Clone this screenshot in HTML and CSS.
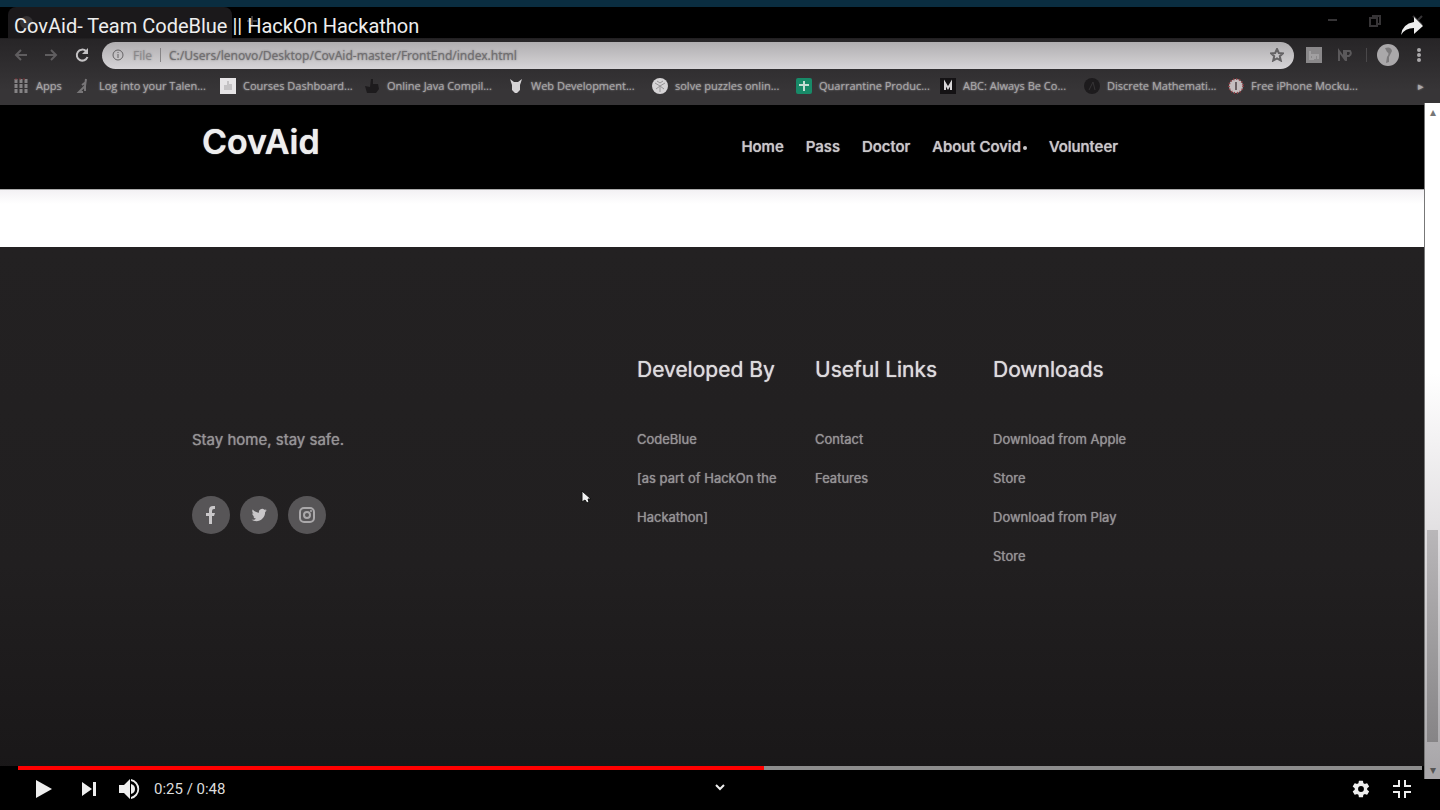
FILE: index.html
```html
<!DOCTYPE html>
<html lang="en">
<head>
<meta charset="utf-8">
<meta name="viewport" content="width=device-width, initial-scale=1">
<title>CovAid- Team CodeBlue || HackOn Hackathon</title>
<link rel="stylesheet" href="styles.css">
</head>
<body>
<main class="player">
  <div class="chrome">
    <div class="strip"></div>
    <div class="tabs">
      <div class="tab"><span class="tab-icon"></span></div>
      <svg class="tab-new" width="10" height="10" viewBox="0 0 10 10"><path fill="none" stroke="#3a383a" stroke-width="2" d="M5 0v10M0 5h10"/></svg>
      <div class="window-buttons">
        <svg width="12" height="12" viewBox="0 0 12 12"><path d="M1 5h9"/></svg>
        <svg width="12" height="12" viewBox="0 0 12 12"><path d="M1 3h7v8H1zM4 3V1h7v8H8"/></svg>
        <svg width="12" height="12" viewBox="0 0 12 12"><path d="M2 1l9 9M11 1l-9 9"/></svg>
      </div>
    </div>
    <div class="toolbar">
      <button class="tool dim" aria-label="Back"><svg width="14" height="14" viewBox="0 0 14 14"><path d="M13 7H2M7 2L2 7l5 5"/></svg></button>
      <button class="tool dim" aria-label="Forward"><svg width="14" height="14" viewBox="0 0 14 14"><path d="M1 7h11M7 2l5 5-5 5"/></svg></button>
      <button class="tool reload" aria-label="Reload"><svg width="16" height="16" viewBox="0 0 16 16"><path d="M12 4a5.500 5.500 0 1 0 1.500 6"/><path class="fill" d="M14 1v6H8z"/></svg></button>
      <div class="address">
        <svg width="12" height="12" viewBox="0 0 12 12"><circle cx="6" cy="6" r="5"/><path d="M6 5v4M6 3v1"/></svg>
        <span class="scheme">File</span><span class="bar"></span>
        <input class="url" aria-label="Address" value="C:/Users/lenovo/Desktop/CovAid-master/FrontEnd/index.html">
        <svg class="star" width="14" height="14" viewBox="0 0 14 14"><path d="M7 1l1.800 4 4.200.4-3.200 2.800 1 4.300L7 10.300l-3.800 2.200 1-4.300L1 5.400 5.200 5z"/></svg>
      </div>
      <div class="extensions">
        <svg width="16" height="16" viewBox="0 0 16 16"><path fill="#8a888a" d="M0 0h16v16H0z"/><path fill="none" stroke="#a19fa1" stroke-width="2" d="M4 4v8h3V8H4M9 12V8h3v4"/></svg>
        <svg class="ext-dim" width="16" height="16" viewBox="0 0 16 16"><path fill="none" stroke="#5b595b" stroke-width="2" d="M2 14V4l5 7V3M9 14V4h4q2 3-1 5H9"/></svg>
        <span class="divider"></span>
        <svg class="avatar" width="22" height="22" viewBox="0 0 22 22"><circle cx="11" cy="11" r="11" fill="#aaa8aa"/><path fill="#7b797b" d="M8 4q6-2 7 3l-3 6v5l-3 1 1-6q3-4 0-5z"/></svg>
        <svg width="4" height="14" viewBox="0 0 4 14" fill="#aaa8aa"><circle cx="2" cy="2" r="2"/><circle cx="2" cy="7" r="2"/><circle cx="2" cy="12" r="2"/></svg>
      </div>
    </div>
    <nav class="bookmarks" aria-label="Bookmarks">
      <a class="apps" href="#"><svg width="16" height="16" viewBox="0 0 16 16"><path stroke="#858385" stroke-width="3" stroke-dasharray="4 1" d="M3 1v14M8 1v14M13 1v14"/><path stroke="#7a3035" stroke-width="1" stroke-dasharray="2 2" d="M2 1h12"/></svg>Apps</a>
      <a href="#"><svg width="16" height="16" viewBox="0 0 16 16"><path fill="none" stroke="#777577" stroke-width="2" d="M10 1l-1 7-6 6h4M9 8v5M6 7l4-3"/></svg>Log into your Talen...</a>
      <a href="#"><svg width="16" height="16" viewBox="0 0 16 16"><path fill="#e6e4e6" d="M0 0h16v16H0z"/><path fill="#c4c2c4" d="M7 3h2v3h3v6H4V7h3z"/></svg>Courses Dashboard...</a>
      <a href="#"><svg width="16" height="16" viewBox="0 0 16 16"><path fill="#1d1b1d" d="M7 1h2v5h5l1 5-3 4H3L1 8l5 1z"/></svg>Online Java Compil...</a>
      <a href="#"><svg width="16" height="16" viewBox="0 0 16 16"><path fill="#d6d4d6" d="M2 1l4 3h4l4-3-2 6v5l-3 3H7l-3-3V7z"/></svg>Web Development...</a>
      <a href="#"><svg width="16" height="16" viewBox="0 0 16 16"><circle cx="8" cy="8" r="8" fill="#d6d4d6"/><path fill="none" stroke="#969496" stroke-width="1" d="M3 5l5 3 5-3M8 8v6M5 3l3 2 3-2M4 11l4-3 4 3"/></svg>solve puzzles onlin...</a>
      <a href="#"><svg width="16" height="16" viewBox="0 0 16 16"><rect width="16" height="16" rx="2" fill="#188a68"/><path fill="none" stroke="#c5ddd4" stroke-width="2" d="M8 3v10M3 7h10"/></svg>Quarrantine Produc...</a>
      <a href="#"><svg width="16" height="16" viewBox="0 0 16 16"><path fill="#141214" d="M0 0h16v16H0z"/><path fill="none" stroke="#d6d4d6" stroke-width="2" d="M5 12V5l3 5 3-5v7"/></svg>ABC: Always Be Co...</a>
      <a href="#"><svg width="16" height="16" viewBox="0 0 16 16"><circle cx="8" cy="8" r="8" fill="#1d1b1d"/><path fill="none" stroke="#353335" stroke-width="1" d="M5 12l4-8 2 8"/></svg>Discrete Mathemati...</a>
      <a href="#"><svg width="16" height="16" viewBox="0 0 16 16"><circle cx="8" cy="8" r="7" fill="#c6bfc0" stroke="#913b40" stroke-width="2" stroke-dasharray="1 2"/><path stroke="#6c6264" stroke-width="2" d="M8 4v8"/></svg>Free iPhone Mocku...</a>
      <span class="more">▸</span>
    </nav>
  </div>

  <div class="viewport">
    <div class="page">
      <header class="header">
        <div class="container header-row">
          <a class="brand" href="#">CovAid</a>
          <nav class="menu" aria-label="Main">
            <a href="#">Home</a><a href="#">Pass</a><a href="#">Doctor</a><a href="#">About Covid<i class="caret"></i></a><a href="#">Volunteer</a>
          </nav>
        </div>
      </header>
      <div class="blank"></div>
      <footer class="footer">
        <div class="container columns">
          <section class="intro">
            <p>Stay home, stay safe.</p>
            <div class="social">
              <a href="#" aria-label="Facebook"><svg width="18" height="18" viewBox="0 0 18 18"><path fill="#c9c7c9" d="M7 18v-8H4V7h3V4q0-4 4-4h2v3h-1q-2 0-2 2v2h3l-1 3h-2v8z"/></svg></a>
              <a href="#" aria-label="Twitter"><svg width="16" height="16" viewBox="0 0 24 24"><path fill="#c9c7c9" d="M23.600 5c-.8.400-1.700.6-2.600.8 1-.6 1.600-1.500 2-2.600-.9.500-1.900.9-2.900 1.100A4.700 4.700 0 0 0 12 8.500C8.200 8.300 4.800 6.500 2.500 3.700c-1.200 2-.6 4.800 1.400 6.200-.7 0-1.500-.2-2.100-.6 0 2.200 1.500 4.200 3.700 4.700-.7.200-1.400.2-2.100.1.600 1.900 2.300 3.200 4.300 3.200A9.400 9.400 0 0 1 .8 19.200c10 5.700 20.600-1.600 20.400-11.700 1-.7 1.800-1.500 2.400-2.500z"/></svg></a>
              <a href="#" aria-label="Instagram"><svg width="18" height="18" viewBox="0 0 18 18"><g fill="none" stroke="#aaa8aa" stroke-width="2"><rect x="2" y="2" width="14" height="14" rx="4"/><circle cx="9" cy="9" r="3"/></g><circle cx="13" cy="5" r="1" fill="#aaa8aa"/></svg></a>
            </div>
          </section>
          <section>
            <h2>Developed By</h2>
            <ul><li>CodeBlue</li><li>[as part of HackOn the Hackathon]</li></ul>
          </section>
          <section>
            <h2>Useful Links</h2>
            <ul><li><a href="#">Contact</a></li><li><a href="#">Features</a></li></ul>
          </section>
          <section>
            <h2>Downloads</h2>
            <ul><li><a href="#">Download from Apple Store</a></li><li><a href="#">Download from Play Store</a></li></ul>
          </section>
        </div>
      </footer>
    </div>
    <div class="scrollbar"><span class="arrow">▴</span><span class="space"></span><span class="thumb"></span><span class="arrow end">▾</span></div>
  </div>

  <div class="titlebar">
    <h1>CovAid- Team CodeBlue || HackOn Hackathon</h1>
    <button aria-label="Share"><svg width="24" height="20" viewBox="0 0 24 20"><path fill="#eee" d="M14 1l9 9-9 8v-6Q5 12 1 19 2 8 14 6z"/></svg></button>
  </div>

  <svg class="cursor" width="10" height="14" viewBox="0 0 10 14"><path fill="#f2f2f2" stroke="#111" d="M1 1v11l3-2 2 3 2-1-1-3h3z"/></svg>

  <div class="controls">
    <div class="progress"><div class="played" style="width:53.1%"></div></div>
    <div class="control-row">
      <div class="group">
        <button class="play" aria-label="Play"><svg width="16" height="18" viewBox="0 0 16 18"><path d="M0 0l16 9-16 9z"/></svg></button>
        <button class="next" aria-label="Next"><svg width="14" height="14" viewBox="0 0 14 14"><path d="M0 0l10 7-10 7zM11 0h3v14h-3z"/></svg></button>
        <button class="volume" aria-label="Mute"><svg width="21" height="20" viewBox="0 0 21 20"><path d="M0 6h5l6-6v20l-6-6H0zM12 5q4 1 4 5t-4 5z"/><path d="M12 0a10.200 10.200 0 0 1 0 20v-2a8.200 8.200 0 0 0 0-16z"/></svg></button>
        <span class="time">0:25 / 0:48</span>
      </div>
      <button class="expand" aria-label="More videos"><svg width="10" height="10" viewBox="0 0 10 10"><path fill="none" stroke="#eee" stroke-width="2" d="M1 2l4 4 4-4"/></svg></button>
      <div class="group right">
        <button aria-label="Settings"><svg width="20" height="20" viewBox="0 0 24 24"><path d="M19.400 13a7.500 7.500 0 0 0 0-2l2.100-1.600a.5.500 0 0 0 .1-.7l-2-3.400a.5.500 0 0 0-.6-.2l-2.500 1a7.300 7.300 0 0 0-1.700-1l-.4-2.700a.5.500 0 0 0-.5-.4h-4a.5.500 0 0 0-.5.400L9 5.100a7.700 7.700 0 0 0-1.700 1l-2.500-1a.5.500 0 0 0-.6.200l-2 3.400a.5.500 0 0 0 .1.700L4.500 11a7.900 7.900 0 0 0 0 2l-2.200 1.600a.5.500 0 0 0-.1.700l2 3.400c.1.200.4.300.6.200l2.500-1c.5.400 1.100.8 1.700 1l.4 2.700c0 .2.200.4.500.4h4c.3 0 .5-.2.500-.4l.4-2.700c.6-.2 1.200-.6 1.700-1l2.500 1c.2.100.5 0 .6-.2l2-3.400a.5.500 0 0 0-.1-.7zM12 15.500a3.500 3.500 0 1 1 0-7 3.500 3.500 0 0 1 0 7z"/></svg></button>
        <button aria-label="Exit full screen"><svg width="18" height="18" viewBox="0 0 18 18"><path fill="none" stroke="#eee" stroke-width="2" d="M0 6h6V0M12 0v6h6M0 12h6v6M12 18v-6h6"/></svg></button>
      </div>
    </div>
  </div>
</main>
</body>
</html>
```
FILE: styles.css
```css
* { box-sizing: border-box; }
body { margin: 0; background: #000; font-family: Inter, sans-serif; }
a { color: inherit; text-decoration: none; }
button { display: flex; padding: 0; border: 0; background: none; color: inherit; }
svg { display: block; flex: none; }
h1, h2, p, ul { margin: 0; padding: 0; font-weight: 400; }
ul { list-style: none; }

.player { position: relative; display: flex; flex-direction: column; min-height: 100vh; padding-bottom: 31px; }

/* Browser frame */
.chrome { font-family: "Open Sans", "Noto Sans", sans-serif; text-shadow: 0 0 2px currentColor; background: linear-gradient(#1c1a1c 38px, #272527 39px, #373537 90px); }
.strip { height: 7px; background: #0a2d40; }
.tabs { display: flex; align-items: center; height: 31px; background: #000; }
.tab { width: 224px; height: 31px; margin-left: 8px; padding: 9px 12px; border-radius: 8px 8px 0 0; background: #1b191b; }
.tab-icon { display: block; width: 13px; height: 13px; border-radius: 50%; background: #353335; }
.tab-new { margin: 0 0 4px 15px; }
.window-buttons { display: flex; gap: 30px; margin-left: auto; padding: 0 17px 4px 0; fill: none; stroke: #363436; stroke-width: 2; }

.toolbar { display: flex; align-items: center; height: 34px; padding: 0 19px 0 14px; }
.tool { margin-right: 16px; fill: none; stroke: #c4c2c4; stroke-width: 2; }
.tool.dim { stroke: #5f5d5f; }
.tool.reload { margin-right: 12px; }
.fill { fill: #c4c2c4; stroke: none; }
.address { display: flex; flex: 1; align-items: center; height: 27px; padding: 0 10px; border-radius: 14px; background: linear-gradient(#b0aeb0, #d6d4d7); color: #706e70; font-size: 12px; fill: none; stroke: #646264; stroke-width: 1; }
.scheme { margin-left: 9px; color: #8a888a; }
.star { stroke-width: 2; }
.bar { width: 1px; height: 14px; margin: 0 8px; background: #868486; }
.url { flex: 1; min-width: 0; padding: 0; border: 0; background: none; color: inherit; font: 12px "Noto Sans", sans-serif; text-shadow: inherit; }
.extensions { display: flex; align-items: center; margin-left: 12px; }
.ext-dim { margin-left: 15px; }
.divider { width: 1px; height: 14px; margin: 0 10px 0 13px; background: #4a484a; }
.avatar { margin-right: 18px; }

.bookmarks { display: flex; align-items: center; height: 33px; padding: 0 16px 6px 13px; color: #aaa8aa; font-size: 11px; white-space: nowrap; }
.bookmarks a { display: flex; flex: 0 1 144px; align-items: center; gap: 7px; min-width: 0; }
.bookmarks .apps { flex: 0 0 63px; }
.more { margin-left: auto; }

/* Recorded page */
.viewport { display: flex; flex: 1; }
.page { display: flex; flex: 1; flex-direction: column; min-width: 0; text-shadow: 0 0 1px currentColor; }
.container { width: 75%; margin: 0 auto; }
.header { background: #000; }
.header-row { display: flex; justify-content: space-between; height: 84px; padding: 0 128px 0 24px; }
.brand { padding-top: 16px; color: #eee; font-size: 34px; font-weight: 600; line-height: 42px; }
.menu { display: flex; gap: 22px; padding-top: 32px; color: #c9c7c9; font-size: 15px; font-weight: 500; line-height: 20px; white-space: nowrap; }
.caret { display: inline-block; width: 4px; height: 4px; margin: 0 0 2px 2px; border-radius: 50%; background: #c9c7c9; }
.blank { height: 58px; border-top: 1px solid #aaa; background: linear-gradient(#f3f1f4, #fff 14px); }
.footer { flex: 1; padding: 107px 0 180px; background: linear-gradient(#232122, #211f20 60%, #191718); }
.columns { display: grid; grid-template-columns: 5fr 2fr 2fr 2fr 1fr; }
.columns section { min-width: 0; padding: 0 0 0 14px; }
.columns h2 { color: #dddbdd; font-size: 21px; line-height: 32px; white-space: nowrap; }
.columns ul { margin-top: 34px; padding-right: 24px; color: #959395; font-size: 13px; line-height: 39px; }
.intro { color: #959395; font-size: 15px; line-height: 39px; }
.columns .intro { padding-top: 66px; }
.social { display: flex; gap: 10px; margin-top: 37px; }
.social a { display: grid; place-items: center; width: 38px; height: 38px; border-radius: 50%; background: #575557; }

.scrollbar { z-index: 2; display: flex; flex-direction: column; width: 16px; margin-top: -2px; border-left: 1px solid #777; background: linear-gradient(#fff 40%, #e4e2e4 62%, #a9a7aa 98%); }
.arrow { height: 18px; color: #777; font-size: 12px; line-height: 18px; text-align: center; }
.arrow.end { height: 37px; padding-top: 19px; color: #555; }
.space { flex: 409; }
.thumb { flex: 212; margin: 0 2px; background: linear-gradient(#b9b7b9, #868486); }

/* Player overlay */
.titlebar { position: absolute; top: 7px; left: 0; right: 0; display: flex; align-items: center; justify-content: space-between; height: 38px; padding: 0 16px 0 14px; font-family: Roboto, sans-serif; }
.titlebar h1 { color: #eee; font-size: 20px; line-height: 24px; }
.cursor { position: absolute; top: 490px; left: 581px; }
.controls { position: absolute; bottom: 0; left: 0; right: 0; background: #000; color: #ddd; font-family: Roboto, sans-serif; fill: #eee; }
.progress { height: 4px; margin: 0 18px; background: #8d8d8d; }
.played { height: 4px; background: #f00; }
.control-row { display: grid; grid-template-columns: 1fr auto 1fr; align-items: center; height: 40px; padding-bottom: 2px; }
.group { display: flex; align-items: center; }
.play { margin-left: 36px; }
.next { margin-left: 30px; }
.volume { margin-left: 23px; }
.time { margin-left: 14px; font-size: 15px; line-height: 20px; }
.expand { padding-bottom: 2px; }
.right { justify-content: flex-end; gap: 22px; padding-right: 29px; }
```
